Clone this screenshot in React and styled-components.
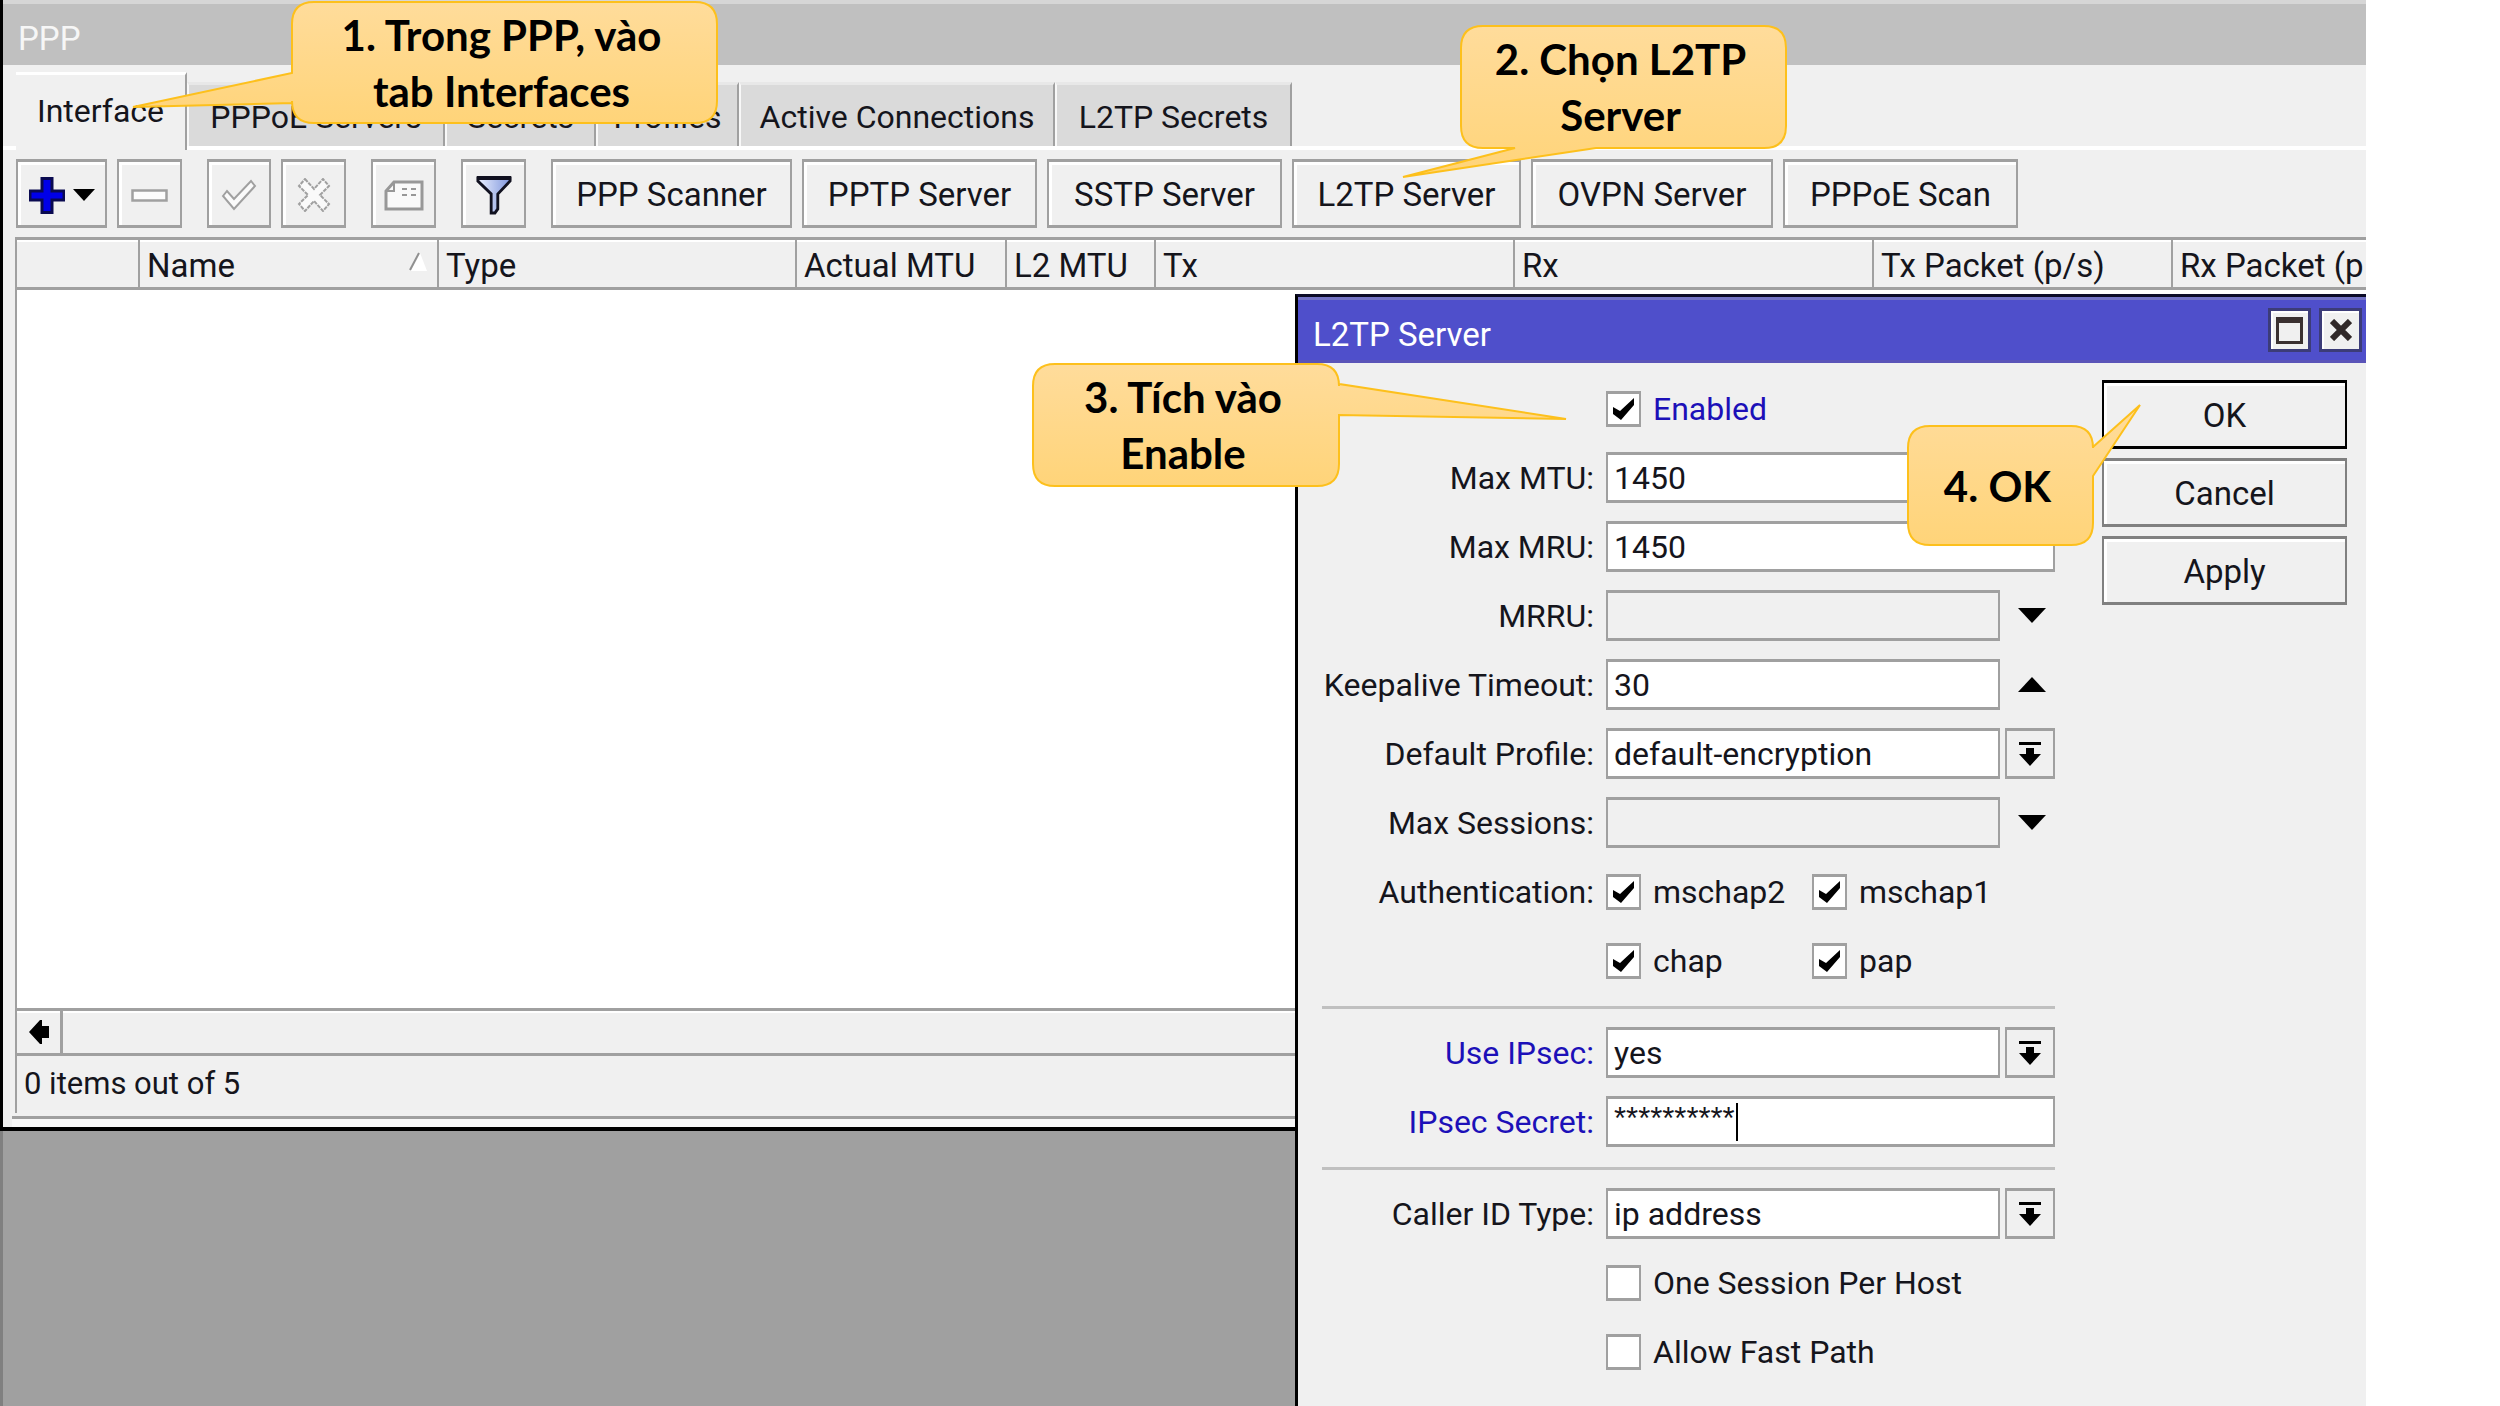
import React from "react";
import styled, { createGlobalStyle } from "styled-components";

const GlobalStyle = createGlobalStyle`
  *, *::before, *::after { box-sizing: border-box; }
  body { margin: 0; background: #fff; overflow: hidden; }
  body, button, input, select {
    font-family: Roboto, "Liberation Sans", sans-serif;
    font-size: 33px;
    line-height: 40px;
    color: #15151c;
  }
`;

const LINE = "#a0a0a0";
const FACE = "#f0f0f0";
const BLUE = "#1c10b8";

/* ---------- desktop and the PPP window ---------- */

const Desktop = styled.main`
  position: relative;
  height: 100vh;
  margin-right: 134px;
  overflow: hidden;
  background: #a0a0a0;
  box-shadow: inset 3px 0 #808080;
`;

const PppWindow = styled.section`
  display: flex;
  flex-direction: column;
  background: ${FACE};
  border-left: 3px solid #000;
  border-bottom: 4px solid #000;
`;

const PppTitle = styled.header`
  display: flex;
  align-items: center;
  height: 65px;
  padding: 9px 15px 0;
  background: #c0c0c0;
  border-top: 4px solid #d6d6d6;
  color: #f6f6f6;
  h1 { margin: 0; font: inherit; }
`;

const Tabs = styled.nav`
  display: flex;
  align-items: flex-end;
  height: 85px;
  padding-left: 13px;
  border-bottom: 4px solid #fff;
`;

const Tab = styled.button`
  width: ${(p) => p.$width}px;
  height: ${(p) => (p.$active ? 78 : 64)}px;
  margin-bottom: ${(p) => (p.$active ? -4 : 0)}px;
  padding: ${(p) => (p.$active ? "0 0 4px" : "2px 0 0")};
  border: 0;
  border-right: 2px solid ${LINE};
  border-left: ${(p) => (p.$active ? 0 : 2)}px solid #f8f8f8;
  border-top: 3px solid ${(p) => (p.$active ? "#fff" : "#e8e8e8")};
  background: ${(p) => (p.$active ? FACE : "#dadada")};
  font-size: 32px;
  white-space: nowrap;
`;

const Toolbar = styled.div`
  display: flex;
  gap: 25px;
  padding: 9px 13px;
`;

const ToolGroup = styled.div`
  display: flex;
  gap: 10px;
`;

const PushButton = styled.button`
  display: flex;
  align-items: center;
  justify-content: center;
  gap: 8px;
  width: ${(p) => p.$width}px;
  height: 69px;
  padding: 3px 0 0;
  border: solid ${(p) => p.$line || LINE};
  border-width: 3px 2px;
  background: ${FACE};
  box-shadow: inset 3px 3px #fff;
  white-space: nowrap;
  svg { display: block; }
`;

const List = styled.div`
  display: flex;
  flex-direction: column;
  margin-left: 12px;
  border-left: 2px solid ${LINE};
`;

const Grid = styled.table`
  width: 100%;
  table-layout: fixed;
  border-spacing: 0;
  border-top: 3px solid ${LINE};
  border-bottom: 3px solid ${LINE};
  th {
    height: 47px;
    padding: 4px 0 0 7px;
    text-align: left;
    font-weight: normal;
    white-space: nowrap;
    overflow: hidden;
    box-shadow: inset 0 2px #fff;
  }
  th + th { border-left: 2px solid ${LINE}; }
`;

const SortHead = styled.span`
  display: flex;
  align-items: center;
  justify-content: space-between;
  padding-right: 10px;
  svg { margin-bottom: 8px; }
`;

const ListBody = styled.div`
  height: 718px;
  background: #fff;
`;

const ScrollBar = styled.div`
  display: flex;
  height: 48px;
  border-top: 3px solid ${LINE};
  border-bottom: 3px solid ${LINE};
  box-shadow: inset 0 2px #fff;
`;

const ScrollButton = styled.button`
  display: flex;
  align-items: center;
  justify-content: center;
  width: 46px;
  padding: 0;
  border: 0;
  border-right: 3px solid ${LINE};
  background: transparent;
`;

const Status = styled.footer`
  height: 57px;
  padding: 8px 7px 0;
  font-size: 31px;
`;

const WindowFoot = styled.div`
  height: 11px;
  margin: 3px 0 0 9px;
  border-top: 3px solid ${LINE};
  background: #f8f8f8;
`;

/* ---------- L2TP Server dialog ---------- */

const Dialog = styled.section`
  position: absolute;
  top: 294px;
  right: 0;
  bottom: 0;
  width: 1071px;
  display: flex;
  flex-direction: column;
  background: ${FACE};
  border-left: 3px solid #000;
  border-top: 3px solid #0c0c28;
`;

const DialogTitle = styled.header`
  display: flex;
  align-items: center;
  gap: 8px;
  height: 66px;
  padding: 4px 4px 0 15px;
  background: #4f4fcb;
  border-top: 3px solid #7474c6;
  border-bottom: 3px solid #5a54b8;
  color: #fff;
  h2 { flex: 1; margin: 0; padding-top: 6px; font: inherit; }
`;

const CaptionButton = styled.button`
  display: grid;
  place-items: center;
  width: 43px;
  height: 44px;
  margin-bottom: 4px;
  padding: 0;
  border: 3px solid #3c3c78;
  background: ${FACE};
  box-shadow: inset 2px 2px #fff;
`;

const DialogBody = styled.div`
  display: flex;
  justify-content: space-between;
  align-items: flex-start;
  padding: 17px 19px 0 24px;
`;

const Form = styled.form`
  display: flex;
  flex-direction: column;
  gap: 18px;
  width: 733px;
  padding-top: 3px;
  &, input, select { font-size: 32px; }
`;

const Row = styled.div`
  display: grid;
  grid-template-columns: 272px minmax(0, 1fr);
  column-gap: 12px;
  align-items: center;
  height: 51px;
`;

const Label = styled.label`
  justify-self: end;
  white-space: nowrap;
  color: ${(p) => (p.$set ? BLUE : "inherit")};
`;

const Control = styled.div`
  position: relative;
  grid-column: 2;
  display: flex;
  gap: 5px;
`;

const Field = styled.input`
  flex: 1;
  min-width: 0;
  height: 51px;
  padding: 0 0 0 6px;
  border: solid ${LINE};
  border-width: 3px 2px;
  border-radius: 0;
  background: ${(p) => (p.disabled ? FACE : "#fff")};
  outline: 0;
`;

const SecretField = styled(Field)`
  && { font-size: 31px; }
  padding-bottom: 6px;
  font-family: "Liberation Sans", sans-serif;
`;

const Caret = styled.span`
  position: absolute;
  left: 130px;
  top: 7px;
  width: 2px;
  height: 38px;
  background: #000;
`;

const Choice = styled.select`
  flex: 1;
  min-width: 0;
  height: 51px;
  padding: 0 0 0 6px;
  border: solid ${LINE};
  border-width: 3px 2px;
  border-radius: 0;
  background: #fff;
  appearance: none;
`;

const SideButton = styled.button`
  display: grid;
  place-items: center;
  flex: none;
  width: 50px;
  height: 51px;
  padding: 0 0 0 ${(p) => (p.$flat ? 4 : 0)}px;
  border: solid ${(p) => (p.$flat ? "transparent" : LINE)};
  border-width: 3px 2px;
  background: transparent;
`;

const Checks = styled.div`
  grid-column: 2;
  display: grid;
  grid-template-columns: 206px 1fr;
`;

const Check = styled.label`
  display: flex;
  align-items: center;
  gap: 12px;
  white-space: nowrap;
  color: ${(p) => (p.$set ? BLUE : "inherit")};
`;

const Box = styled.span`
  position: relative;
  flex: none;
  display: grid;
  place-items: center;
  width: 35px;
  height: 36px;
  border: solid ${LINE};
  border-width: 3px 2px;
  background: #fff;
  input {
    position: absolute;
    inset: 0;
    margin: 0;
    opacity: 0;
  }
  input:not(:checked) + svg { display: none; }
`;

const Rule = styled.hr`
  width: 100%;
  height: 5px;
  margin: 0;
  border: 0;
  border-bottom: 3px solid #c0c0c0;
`;

const Actions = styled.div`
  display: flex;
  flex-direction: column;
  gap: 9px;
`;

/* ---------- callouts ---------- */

const CalloutBox = styled.aside`
  position: absolute;
  left: ${(p) => p.$x}px;
  top: ${(p) => p.$y}px;
  width: ${(p) => p.$w}px;
  height: ${(p) => p.$h}px;
  display: grid;
  place-items: center;
  padding-right: 6px;
  color: #000;
  font-family: Lato, "Open Sans", sans-serif;
  font-weight: 700;
  font-size: 42px;
  line-height: 56px;
  text-align: center;
  white-space: pre;
  svg {
    position: absolute;
    inset: 0;
    overflow: visible;
  }
  p { position: relative; margin: 0; }
`;

function bubblePath(w, h, tail) {
  const r = 22;
  const { side, from, to, tip } = tail;
  const cut = {
    right: `V${from} L${tip[0]} ${tip[1]} L${w} ${to}`,
    bottom: `H${to} L${tip[0]} ${tip[1]} L${from} ${h}`,
    left: `V${to} L${tip[0]} ${tip[1]} L0 ${from}`,
  };
  const on = (s) => (s === side ? cut[s] : "");
  return [
    `M${r} 0 H${w - r} Q${w} 0 ${w} ${r}`,
    on("right"),
    `V${h - r} Q${w} ${h} ${w - r} ${h}`,
    on("bottom"),
    `H${r} Q0 ${h} 0 ${h - r}`,
    on("left"),
    `V${r} Q0 0 ${r} 0 Z`,
  ].join(" ");
}

function Callout({ id, x, y, w, h, tail, children }) {
  return (
    <CalloutBox $x={x} $y={y} $w={w} $h={h}>
      <svg width={w} height={h} aria-hidden="true">
        <defs>
          <linearGradient id={id} x1="0" y1="0" x2="0" y2="1">
            <stop offset="0" stopColor="#ffdc9b" />
            <stop offset="1" stopColor="#ffd479" />
          </linearGradient>
        </defs>
        <path d={bubblePath(w, h, tail)} fill={`url(#${id})`} stroke="#fdc01c" strokeWidth="2" />
      </svg>
      <p>{children}</p>
    </CalloutBox>
  );
}

/* ---------- icons ---------- */

const PlusIcon = () => (
  <svg width="36" height="37" viewBox="0 0 36 37">
    <path d="M13 1.500h10v12.500h12v9H23v12.500H13V23H1v-9h12z" fill="#0000e8" stroke="#0a0a50" strokeWidth="3" />
  </svg>
);
const Triangle = ({ up, w = 28, h = 15 }) => (
  <svg width={w} height={h} viewBox="0 0 28 15" preserveAspectRatio="none">
    <path d={up ? "M14 0 28 15H0z" : "M0 0h28L14 15z"} fill="#000" />
  </svg>
);
const MinusIcon = () => (
  <svg width="37" height="13" viewBox="0 0 37 13">
    <rect x="1.500" y="1.500" width="34" height="10" fill="#fcfcfc" stroke={LINE} strokeWidth="2.500" />
  </svg>
);
const CheckOutline = () => (
  <svg width="36" height="32" viewBox="0 0 36 32">
    <path d="M2 17l4-5 7 8L30 2l4 5-21 23z" fill="#fafafa" stroke={LINE} strokeWidth="2" />
  </svg>
);
const CrossOutline = () => (
  <svg width="34" height="34" viewBox="0 0 34 34">
    <path d="M8 1l9 10L26 1l6 7-9 9 9 9-6 7-9-10L8 33l-6-7 9-9L2 8z" fill="#fafafa" stroke={LINE} strokeWidth="2" strokeDasharray="4 1" />
  </svg>
);
const NoteIcon = () => (
  <svg width="40" height="31" viewBox="0 0 40 31">
    <path d="M10 2h28v27H2V11z" fill="#fafafa" stroke="#989898" strokeWidth="3" />
    <path d="M10 2v9H2M18 9h5m4 0h5M18 15h5m4 0h5" fill="none" stroke="#989898" strokeWidth="2" />
  </svg>
);
const FunnelIcon = () => (
  <svg width="36" height="40" viewBox="0 0 38 40" preserveAspectRatio="none">
    <defs>
      <linearGradient id="funnel" x1="0" x2="1">
        <stop offset="0" stopColor="#eaf0ff" />
        <stop offset="1" stopColor="#8096dc" />
      </linearGradient>
    </defs>
    <path d="M2 3h34v3L23 19v15l-3 4h-4V19L2 6z" fill="url(#funnel)" stroke="#111120" strokeWidth="3" />
    <path d="M1 3h36" stroke="#111120" strokeWidth="4" />
  </svg>
);
const SortIcon = () => (
  <svg width="18" height="20" viewBox="0 0 18 20">
    <path d="M11 1l7 18H2z" fill="#fff" />
    <path d="M10 1L1 18" stroke="#909090" strokeWidth="2" />
  </svg>
);
const LeftIcon = () => (
  <svg width="20" height="24" viewBox="0 0 20 24">
    <path d="M0 12L11 0h2v6h7v12h-7v6h-2z" fill="#000" />
  </svg>
);
const DropIcon = () => (
  <svg width="22" height="24" viewBox="0 0 22 24">
    <path d="M0 0h22v3H0zM7 6h8v6h7L11 24 0 12h7z" fill="#000" />
  </svg>
);
const TickIcon = () => (
  <svg width="23" height="22" viewBox="0 0 23 22">
    <path d="M1 9l7 4L22 0v7L9 22 1 16z" fill="#000" />
  </svg>
);
const MaxIcon = () => (
  <svg width="29" height="27" viewBox="0 0 29 27">
    <path d="M1 0h27v27H1zM4 6v18h21V6z" fill="#3a3030" fillRule="evenodd" />
  </svg>
);
const CloseIcon = () => (
  <svg width="22" height="22" viewBox="0 0 22 22">
    <path d="M2 2l18 18M20 2L2 20" stroke="#302828" strokeWidth="6" />
  </svg>
);

/* ---------- form parts ---------- */

function CheckBox({ label, checked, set }) {
  return (
    <Check $set={set}>
      <Box>
        <input type="checkbox" defaultChecked={checked} />
        <TickIcon />
      </Box>
      {label}
    </Check>
  );
}

function TextRow({ id, label, value, disabled, arrow }) {
  return (
    <Row>
      <Label htmlFor={id}>{label}</Label>
      <Control>
        <Field id={id} defaultValue={value} disabled={disabled} />
        {arrow && (
          <SideButton type="button" $flat aria-label={arrow === "up" ? "Collapse" : "Expand"}>
            <Triangle up={arrow === "up"} />
          </SideButton>
        )}
      </Control>
    </Row>
  );
}

function ChoiceRow({ id, label, value, set }) {
  return (
    <Row>
      <Label htmlFor={id} $set={set}>{label}</Label>
      <Control>
        <Choice id={id} defaultValue={value}>
          <option>{value}</option>
        </Choice>
        <SideButton type="button" aria-label="Open list">
          <DropIcon />
        </SideButton>
      </Control>
    </Row>
  );
}

const TABS = [
  ["Interface", 171],
  ["PPPoE Servers", 258],
  ["Secrets", 151],
  ["Profiles", 143],
  ["Active Connections", 316],
  ["L2TP Secrets", 237],
];

const TOOLS = [
  ["PPP Scanner", 241],
  ["PPTP Server", 235],
  ["SSTP Server", 235],
  ["L2TP Server", 229],
  ["OVPN Server", 242],
  ["PPPoE Scan", 235],
];

const COLUMNS = [
  ["", 121],
  ["Name", 299],
  ["Type", 358],
  ["Actual MTU", 210],
  ["L2 MTU", 149],
  ["Tx", 359],
  ["Rx", 359],
  ["Tx Packet (p/s)", 299],
  ["Rx Packet (p", null],
];

export default function App() {
  return (
    <>
      <GlobalStyle />
      <Desktop>
        <PppWindow>
          <PppTitle><h1>PPP</h1></PppTitle>
          <Tabs>
            {TABS.map(([name, width], i) => (
              <Tab key={name} $width={width} $active={i === 0}>{name}</Tab>
            ))}
          </Tabs>
          <Toolbar>
            <ToolGroup>
              <PushButton $width={91} aria-label="Add"><PlusIcon /><Triangle w={22} h={12} /></PushButton>
              <PushButton $width={65} aria-label="Remove"><MinusIcon /></PushButton>
            </ToolGroup>
            <ToolGroup>
              <PushButton $width={64} aria-label="Enable"><CheckOutline /></PushButton>
              <PushButton $width={65} aria-label="Disable"><CrossOutline /></PushButton>
            </ToolGroup>
            <PushButton $width={65} aria-label="Comment"><NoteIcon /></PushButton>
            <PushButton $width={65} aria-label="Filter"><FunnelIcon /></PushButton>
            <ToolGroup>
              {TOOLS.map(([name, width]) => (
                <PushButton key={name} $width={width}>{name}</PushButton>
              ))}
            </ToolGroup>
          </Toolbar>
          <List>
            <Grid>
              <colgroup>
                {COLUMNS.map(([name, width]) => <col key={name} width={width || undefined} />)}
              </colgroup>
              <thead>
                <tr>
                  {COLUMNS.map(([name]) => (
                    <th key={name} scope="col">
                      {name === "Name" ? <SortHead>Name<SortIcon /></SortHead> : name}
                    </th>
                  ))}
                </tr>
              </thead>
            </Grid>
            <ListBody />
            <ScrollBar>
              <ScrollButton aria-label="Scroll left"><LeftIcon /></ScrollButton>
            </ScrollBar>
            <Status>0 items out of 5</Status>
          </List>
          <WindowFoot />
        </PppWindow>

        <Dialog>
          <DialogTitle>
            <h2>L2TP Server</h2>
            <CaptionButton aria-label="Maximize"><MaxIcon /></CaptionButton>
            <CaptionButton aria-label="Close"><CloseIcon /></CaptionButton>
          </DialogTitle>
          <DialogBody>
            <Form>
              <Row><Checks><CheckBox label="Enabled" checked set /></Checks></Row>
              <TextRow id="mtu" label="Max MTU:" value="1450" />
              <TextRow id="mru" label="Max MRU:" value="1450" />
              <TextRow id="mrru" label="MRRU:" disabled arrow="down" />
              <TextRow id="keepalive" label="Keepalive Timeout:" value="30" arrow="up" />
              <ChoiceRow id="profile" label="Default Profile:" value="default-encryption" />
              <TextRow id="sessions" label="Max Sessions:" disabled arrow="down" />
              <Row>
                <Label as="span">Authentication:</Label>
                <Checks>
                  <CheckBox label="mschap2" checked />
                  <CheckBox label="mschap1" checked />
                </Checks>
              </Row>
              <Row>
                <Checks>
                  <CheckBox label="chap" checked />
                  <CheckBox label="pap" checked />
                </Checks>
              </Row>
              <Rule />
              <ChoiceRow id="ipsec" label="Use IPsec:" value="yes" set />
              <Row>
                <Label htmlFor="secret" $set>IPsec Secret:</Label>
                <Control>
                  <SecretField id="secret" defaultValue="**********" />
                  <Caret />
                </Control>
              </Row>
              <Rule />
              <ChoiceRow id="caller" label="Caller ID Type:" value="ip address" />
              <Row><Checks><CheckBox label="One Session Per Host" /></Checks></Row>
              <Row><Checks><CheckBox label="Allow Fast Path" /></Checks></Row>
            </Form>
            <Actions>
              <PushButton $width={245} $line="#000">OK</PushButton>
              <PushButton $width={245} $line="#808080">Cancel</PushButton>
              <PushButton $width={245} $line="#808080">Apply</PushButton>
            </Actions>
          </DialogBody>
        </Dialog>

        <Callout id="step1" x={292} y={2} w={425} h={121} tail={{ side: "left", from: 71, to: 101, tip: [-159, 105] }}>
          {"1. Trong PPP, vào\ntab Interfaces"}
        </Callout>
        <Callout id="step2" x={1461} y={26} w={325} h={122} tail={{ side: "bottom", from: 54, to: 135, tip: [-58, 151] }}>
          {"2. Chọn L2TP\nServer"}
        </Callout>
        <Callout id="step3" x={1033} y={364} w={306} h={122} tail={{ side: "right", from: 20, to: 51, tip: [533, 55] }}>
          {"3. Tích vào\nEnable"}
        </Callout>
        <Callout id="step4" x={1908} y={426} w={185} h={119} tail={{ side: "right", from: 21, to: 50, tip: [232, -21] }}>
          4. OK
        </Callout>
      </Desktop>
    </>
  );
}
